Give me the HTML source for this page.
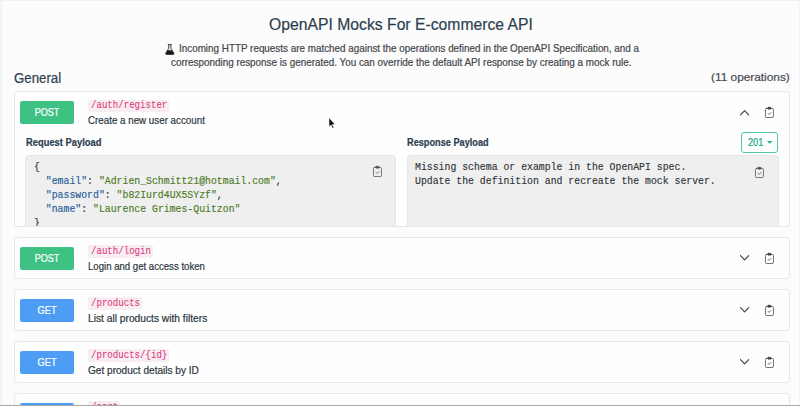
<!DOCTYPE html>
<html lang="en"><head><meta charset="utf-8"><title>OpenAPI Mocks For E-commerce API</title>
<style>
*{box-sizing:border-box;margin:0;padding:0}
html,body{width:800px;height:406px;overflow:hidden;background:#fcfcfc;font-family:"Liberation Sans",sans-serif;color:#2c3e50}
body{position:relative}
h1,h2,p{font-weight:400}
.t{position:absolute;line-height:20px;white-space:nowrap;-webkit-text-stroke:0.2px currentColor}
.card{position:absolute;left:14px;width:776px;height:42px;border:1px solid #e4e7eb;border-radius:4px;background:#fefefe;overflow:hidden}
.btn{position:absolute;left:5px;top:9px;width:54px;height:22.6px;border-radius:2px;color:#fff}
.post{background:#3ec284}
.get{background:#4d9df5}
.codebg{position:absolute;height:12.3px;background:#f8edf1;border-radius:2px}
code,pre{font-family:"Liberation Mono",monospace}
code{position:absolute;font-size:10px;line-height:20px;color:#df3c83;white-space:pre;-webkit-text-stroke:0.1px currentColor;transform:scaleX(0.908);transform-origin:0 50%}
.desc{color:#2d3741}
.lead{color:#42474c}
.prebox{position:absolute;top:63.2px;height:90px;background:#efefef;border:1px solid #e5e5e5;border-radius:4px}
pre{position:absolute;font-size:10.8px;line-height:14px;color:#30353a;white-space:pre;-webkit-text-stroke:0.15px currentColor;transform:scaleX(0.9102);transform-origin:0 0}
.k{color:#1f5c99}.s{color:#4c7a1f}
.dd{position:absolute;left:726px;top:40px;width:37px;height:21px;border:1px solid #52c9a8;border-radius:3px;background:#fdfefe;color:#1aab86}
.ic{position:absolute;overflow:visible}
.edge{position:absolute;left:0;top:0}
</style></head><body>

<header>
<h1 class="t" style="top:14.55px;left:1.00px;width:800px;text-align:center;transform-origin:50% 50%;font-size:16.6px;transform:scaleX(0.9476)">OpenAPI Mocks For E-commerce API</h1>
<p class="lead">
<svg class="ic" style="left:164.9px;top:43.5px" width="9.6" height="11" viewBox="0 0 9.6 11"><path d="M3.7 0.7v3.6L0.7 9.2c-.35.7.05 1.3.8 1.3h6.6c.75 0 1.15-.6.8-1.3L5.9 4.3V0.7" fill="#f2f2f2" stroke="#25282c" stroke-width="0.85" stroke-linejoin="round"/><path d="M3.2 0.6h3.2" stroke="#25282c" stroke-width="0.9" stroke-linecap="round"/><path d="M2.6 6.3h4.4l1.8 3.3c.2.4 0 .7-.5.7H1.3c-.5 0-.7-.3-.5-.7z" fill="#17191c"/></svg>
<span class="t" style="top:38.77px;left:178.70px;transform-origin:0 50%;font-size:10.2px;transform:scaleX(0.9686)">Incoming HTTP requests are matched against the operations defined in the OpenAPI Specification, and a</span>
<span class="t" style="top:52.77px;left:171.20px;transform-origin:0 50%;font-size:10.2px;transform:scaleX(0.9702)">corresponding response is generated. You can override the default API response by creating a mock rule.</span>
</p>
</header>
<main>
<h2 class="t" style="top:68.52px;left:13.60px;transform-origin:0 50%;font-size:13.8px;transform:scaleX(0.9614)">General</h2>
<small class="t" style="top:67.35px;right:10.60px;transform-origin:100% 50%;font-size:11.4px;color:#444a50;transform:scaleX(1.0391)">(11 operations)</small>
<section class="card" style="top:91px;height:136px;border-radius:4px 4px 3px 3px">
<div class="btn post"><span class="t" style="top:1.77px;left:0.00px;width:54px;text-align:center;transform-origin:50% 50%;font-size:10.2px;transform:scaleX(0.887)">POST</span></div>
<span class="codebg" style="left:73.00px;top:7.60px;width:80.9px"></span><code style="left:76.10px;top:3.83px">/auth/register</code>
<div class="t desc" style="top:18.77px;left:73.00px;transform-origin:0 50%;font-size:10.2px;transform:scaleX(0.9598)">Create a new user account</div>
<svg class="ic" style="left:724.80px;top:17.60px" width="9.2" height="5.4" viewBox="0 0 9.2 5.4" fill="none" stroke="#3a4046" stroke-width="1.15" stroke-linecap="round" stroke-linejoin="round"><path d="M0.5 4.8L4.6 0.6L8.7 4.8"/></svg>
<svg class="ic" style="left:749.95px;top:14.70px" width="8.9" height="11" viewBox="0 0 8.9 11" fill="none" stroke="#3a4046" stroke-width="0.75" stroke-linecap="round" stroke-linejoin="round"><rect x="0.45" y="1.35" width="8" height="9.2" rx="1.2"/><rect x="2.75" y="0.3" width="3.4" height="1.9" rx="0.6" fill="#3a4046" stroke-width="0.5"/><path d="M3.1 6.4l1 1 1.9-1.9"/></svg>
<h3 class="t" style="top:40.77px;left:10.70px;transform-origin:0 50%;font-size:10.2px;font-weight:700;transform:scaleX(0.918)">Request Payload</h3>
<h3 class="t" style="top:40.77px;left:392.10px;transform-origin:0 50%;font-size:10.2px;font-weight:700;transform:scaleX(0.902)">Response Payload</h3>
<div class="dd"><span class="t" style="top:-0.16px;left:5.60px;transform-origin:0 50%;font-size:10px;transform:scaleX(0.917)">201</span><svg class="ic" style="left:24.5px;top:8px" width="5.4" height="2.8" viewBox="0 0 6 3"><path d="M0 0h6L3 3z" fill="#1aab86"/></svg></div>
<div class="prebox" style="left:10px;width:370.6px"><pre style="left:8.00px;top:3.82px">{
  <span class="k">"email"</span>: <span class="s">"Adrien_Schmitt21@hotmail.com"</span>,
  <span class="k">"password"</span>: <span class="s">"b82Iurd4UX5SYzf"</span>,
  <span class="k">"name"</span>: <span class="s">"Laurence Grimes-Quitzon"</span>
}</pre><svg class="ic" style="left:347.45px;top:9.70px" width="8.9" height="11" viewBox="0 0 8.9 11" fill="none" stroke="#4a5056" stroke-width="0.75" stroke-linecap="round" stroke-linejoin="round"><rect x="0.45" y="1.35" width="8" height="9.2" rx="1.2"/><rect x="2.75" y="0.3" width="3.4" height="1.9" rx="0.6" fill="#4a5056" stroke-width="0.5"/><path d="M3.1 6.4l1 1 1.9-1.9"/></svg></div>
<div class="prebox" style="left:392.2px;width:371.4px"><pre style="left:7.00px;top:4.22px">Missing schema or example in the OpenAPI spec.
Update the definition and recreate the mock server.</pre><svg class="ic" style="left:347.25px;top:10.50px" width="8.9" height="11" viewBox="0 0 8.9 11" fill="none" stroke="#4a5056" stroke-width="0.75" stroke-linecap="round" stroke-linejoin="round"><rect x="0.45" y="1.35" width="8" height="9.2" rx="1.2"/><rect x="2.75" y="0.3" width="3.4" height="1.9" rx="0.6" fill="#4a5056" stroke-width="0.5"/><path d="M3.1 6.4l1 1 1.9-1.9"/></svg></div>
</section>
<section class="card" style="top:237px">
<div class="btn post"><span class="t" style="top:1.77px;left:0.00px;width:54px;text-align:center;transform-origin:50% 50%;font-size:10.2px;transform:scaleX(0.887)">POST</span></div>
<span class="codebg" style="left:73.00px;top:7.40px;width:64.5px"></span><code style="left:76.10px;top:3.63px">/auth/login</code>
<div class="t desc" style="top:18.77px;left:73.00px;transform-origin:0 50%;font-size:10.2px;transform:scaleX(0.9421)">Login and get access token</div>
<svg class="ic" style="left:724.80px;top:17.00px" width="9.2" height="5.4" viewBox="0 0 9.2 5.4" fill="none" stroke="#3a4046" stroke-width="1.15" stroke-linecap="round" stroke-linejoin="round"><path d="M0.5 0.6L4.6 4.8L8.7 0.6"/></svg>
<svg class="ic" style="left:749.95px;top:14.90px" width="8.9" height="11" viewBox="0 0 8.9 11" fill="none" stroke="#3a4046" stroke-width="0.75" stroke-linecap="round" stroke-linejoin="round"><rect x="0.45" y="1.35" width="8" height="9.2" rx="1.2"/><rect x="2.75" y="0.3" width="3.4" height="1.9" rx="0.6" fill="#3a4046" stroke-width="0.5"/><path d="M3.1 6.4l1 1 1.9-1.9"/></svg>
</section>
<section class="card" style="top:289px">
<div class="btn get"><span class="t" style="top:1.77px;left:0.00px;width:54px;text-align:center;transform-origin:50% 50%;font-size:10.2px;transform:scaleX(0.916)">GET</span></div>
<span class="codebg" style="left:73.00px;top:7.40px;width:53.7px"></span><code style="left:76.10px;top:3.63px">/products</code>
<div class="t desc" style="top:18.77px;left:73.00px;transform-origin:0 50%;font-size:10.2px;transform:scaleX(1.003)">List all products with filters</div>
<svg class="ic" style="left:724.80px;top:17.00px" width="9.2" height="5.4" viewBox="0 0 9.2 5.4" fill="none" stroke="#3a4046" stroke-width="1.15" stroke-linecap="round" stroke-linejoin="round"><path d="M0.5 0.6L4.6 4.8L8.7 0.6"/></svg>
<svg class="ic" style="left:749.95px;top:14.90px" width="8.9" height="11" viewBox="0 0 8.9 11" fill="none" stroke="#3a4046" stroke-width="0.75" stroke-linecap="round" stroke-linejoin="round"><rect x="0.45" y="1.35" width="8" height="9.2" rx="1.2"/><rect x="2.75" y="0.3" width="3.4" height="1.9" rx="0.6" fill="#3a4046" stroke-width="0.5"/><path d="M3.1 6.4l1 1 1.9-1.9"/></svg>
</section>
<section class="card" style="top:341px">
<div class="btn get"><span class="t" style="top:1.77px;left:0.00px;width:54px;text-align:center;transform-origin:50% 50%;font-size:10.2px;transform:scaleX(0.916)">GET</span></div>
<span class="codebg" style="left:73.00px;top:7.40px;width:80.9px"></span><code style="left:76.10px;top:3.63px">/products/{id}</code>
<div class="t desc" style="top:18.77px;left:73.00px;transform-origin:0 50%;font-size:10.2px;transform:scaleX(0.9888)">Get product details by ID</div>
<svg class="ic" style="left:724.80px;top:17.00px" width="9.2" height="5.4" viewBox="0 0 9.2 5.4" fill="none" stroke="#3a4046" stroke-width="1.15" stroke-linecap="round" stroke-linejoin="round"><path d="M0.5 0.6L4.6 4.8L8.7 0.6"/></svg>
<svg class="ic" style="left:749.95px;top:14.90px" width="8.9" height="11" viewBox="0 0 8.9 11" fill="none" stroke="#3a4046" stroke-width="0.75" stroke-linecap="round" stroke-linejoin="round"><rect x="0.45" y="1.35" width="8" height="9.2" rx="1.2"/><rect x="2.75" y="0.3" width="3.4" height="1.9" rx="0.6" fill="#3a4046" stroke-width="0.5"/><path d="M3.1 6.4l1 1 1.9-1.9"/></svg>
</section>
<section class="card" style="top:393px">
<div class="btn get"><span class="t" style="top:1.77px;left:0.00px;width:54px;text-align:center;transform-origin:50% 50%;font-size:10.2px;transform:scaleX(0.916)">GET</span></div>
<span class="codebg" style="left:73.00px;top:7.40px;width:31.9px"></span><code style="left:76.10px;top:3.63px">/cart</code>
<div class="t desc" style="top:18.77px;left:73.00px;transform-origin:0 50%;font-size:10.2px;transform:scaleX(0.9879)">Get current cart</div>
<svg class="ic" style="left:724.80px;top:17.00px" width="9.2" height="5.4" viewBox="0 0 9.2 5.4" fill="none" stroke="#3a4046" stroke-width="1.15" stroke-linecap="round" stroke-linejoin="round"><path d="M0.5 0.6L4.6 4.8L8.7 0.6"/></svg>
<svg class="ic" style="left:749.95px;top:14.90px" width="8.9" height="11" viewBox="0 0 8.9 11" fill="none" stroke="#3a4046" stroke-width="0.75" stroke-linecap="round" stroke-linejoin="round"><rect x="0.45" y="1.35" width="8" height="9.2" rx="1.2"/><rect x="2.75" y="0.3" width="3.4" height="1.9" rx="0.6" fill="#3a4046" stroke-width="0.5"/><path d="M3.1 6.4l1 1 1.9-1.9"/></svg>
</section>
</main>
<svg class="ic" style="left:0;top:0" width="800" height="406" viewBox="0 0 800 406"><path d="M329 117.8v9l2-1.8 1.5 3.3 1.3-.6-1.5-3.2h2.8z" fill="#111" stroke="#fff" stroke-width=".5"/></svg>
<div class="edge" style="width:800px;height:1px;background:#f0f0f0"></div><div class="edge" style="width:1.5px;height:406px;background:#f3f3f3"></div><div class="edge" style="left:799px;width:1px;height:406px;background:#f4f4f4"></div>
<div class="edge" style="top:404.5px;width:800px;height:1.5px;background:#a9a9a9"></div>
</body></html>
